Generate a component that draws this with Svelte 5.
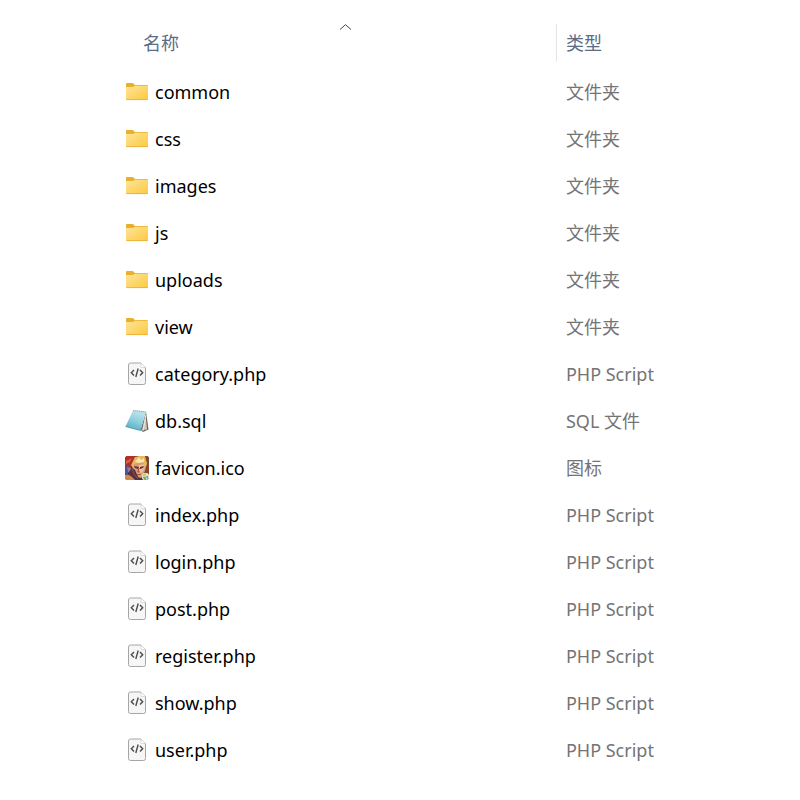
<script>
  let files = [
    { name: "common", type: "文件夹", icon: "folder" },
    { name: "css", type: "文件夹", icon: "folder" },
    { name: "images", type: "文件夹", icon: "folder" },
    { name: "js", type: "文件夹", icon: "folder" },
    { name: "uploads", type: "文件夹", icon: "folder" },
    { name: "view", type: "文件夹", icon: "folder" },
    { name: "category.php", type: "PHP Script", icon: "code" },
    { name: "db.sql", type: "SQL 文件", icon: "note" },
    { name: "favicon.ico", type: "图标", icon: "hero" },
    { name: "index.php", type: "PHP Script", icon: "code" },
    { name: "login.php", type: "PHP Script", icon: "code" },
    { name: "post.php", type: "PHP Script", icon: "code" },
    { name: "register.php", type: "PHP Script", icon: "code" },
    { name: "show.php", type: "PHP Script", icon: "code" },
    { name: "user.php", type: "PHP Script", icon: "code" },
  ];
  let ascending = true;

  function toggleSort() {
    files = [...files].reverse();
    ascending = !ascending;
  }
</script>

<style>
  :global(body) {
    margin: 0;
    background: #fff;
  }
  .files {
    padding: 21px 12px 21px 125px;
    font-family: "Noto Sans", "Noto Sans CJK SC", sans-serif;
    font-size: 18px;
    line-height: 24px;
  }
  table {
    width: 100%;
    table-layout: fixed;
    border-collapse: collapse;
  }
  th,
  td {
    height: 47px;
    padding: 0;
    text-align: left;
    font-weight: normal;
  }
  th {
    vertical-align: top;
  }
  .name {
    width: 65%;
  }
  .heading {
    display: block;
    position: relative;
    box-sizing: border-box;
    height: 38px;
    margin-top: 3px;
    padding: 0 0 0 9px;
    border: 0;
    background: none;
    color: #5a6c86;
    font: inherit;
    text-align: left;
  }
  .name .heading {
    width: calc(100% - 10px);
    margin-left: 10px;
    padding-left: 8px;
  }
  .type .heading {
    width: 100%;
    border-left: 1px solid #e5e5e5;
  }
  .arrow {
    position: absolute;
    top: 0;
    left: 50%;
    margin-left: -6px;
  }
  .descending {
    transform: scaleY(-1);
  }
  .file {
    display: flex;
    align-items: center;
    gap: 6px;
    color: #000;
  }
  .kind {
    padding-left: 10px;
    color: #747474;
  }
  svg {
    display: block;
    flex: none;
  }
</style>

<svelte:head>
  <title>Files</title>
</svelte:head>

<!-- gradients shared by the row icons -->
<svg width="0" height="0" style:position="absolute" aria-hidden="true">
  <defs>
    <linearGradient id="folder-front" x1="0" y1="0" x2="1" y2="1">
      <stop offset="0" stop-color="#ffe59a" />
      <stop offset="1" stop-color="#fcc93f" />
    </linearGradient>
    <linearGradient id="note-cover" x1="0.7" y1="0" x2="0.3" y2="1">
      <stop offset="0" stop-color="#c3e6ec" />
      <stop offset="0.5" stop-color="#8fd0de" />
      <stop offset="1" stop-color="#55adc2" />
    </linearGradient>
    <clipPath id="hero-frame">
      <rect width="24" height="24" rx="3" />
    </clipPath>
  </defs>
</svg>

<main class="files">
  <table>
    <thead>
      <tr>
        <th class="name">
          <button class="heading" on:click={toggleSort}>
            名称
            <svg class="arrow" class:descending={!ascending} width="13" height="6" viewBox="0 0 13 6">
              <path d="M1 5.500 6.500 .7 12 5.500" fill="none" stroke="#444" />
            </svg>
          </button>
        </th>
        <th class="type"><button class="heading">类型</button></th>
      </tr>
    </thead>
    <tbody>
      {#each files as file}
        <tr>
          <td>
            <div class="file">
              <svg width="24" height="24" viewBox="0 0 24 24" aria-hidden="true">
                {#if file.icon === "folder"}
                  <path d="M1 4q0-1 1-1h5.500q.6 0 1 .5L10 5h12q1 0 1 1v3H1z" fill="#e9b02c" />
                  <path d="M1 7h7l2-1.200h13V19q0 1-1 1H2q-1 0-1-1z" fill="url(#folder-front)" />
                  <path d="M1.300 19.600h21.400" stroke="#e5ac35" stroke-width=".8" />
                {:else if file.icon === "code"}
                  <path d="M5.500 1h10.500l4.500 4.500v15q0 2-2 2h-13q-2 0-2-2v-17.500q0-2 2-2z" fill="#f6f6f6" stroke="#a6a6a6" />
                  <path d="M16 1V4.500q0 1 1 1h3.500" fill="#fff" stroke="#ccc" stroke-width=".7" />
                  <path d="m9 8-2.700 2.800L9 13.500m6-5.500 2.700 2.800L15 13.500M13.200 6.500l-2.400 8.500" fill="none" stroke="#4c4c4c" stroke-width="1.400" />
                {:else if file.icon === "note"}
                  <path d="m21 2.500 2.500 18-5.500 2.500-2.500-2.500z" fill="#6d655b" />
                  <path d="m20.500 5 1.500 15.500-5 .5z" fill="#cfcac0" />
                  <path d="m21 6-3 16" stroke="#f2efe8" stroke-width=".8" />
                  <path d="M8 1.500 21 3 15.500 21.500.500 17.500z" fill="url(#note-cover)" />
                  <path d="m.5 17.500 15 4 1-2.500" fill="none" stroke="#4a91a4" stroke-width=".8" />
                  <path d="M8 1.500 21 3" stroke="#a4b0b0" stroke-width="1.200" stroke-dasharray="1.500 .5" />
                {:else}
                  <g clip-path="url(#hero-frame)">
                    <path d="M0 0h24v24H0z" fill="#59302e" />
                    <path d="M0 0h11L6 8l1 3-7-1z" fill="#b52d24" />
                    <path d="m1 5 6-3-2 4-4 2z" fill="#d6623b" />
                    <path d="m0 9 6 2 1 7-7 1z" fill="#4b5391" />
                    <path d="m2 11 4 1 1 5-4-1z" fill="#a0758e" />
                    <path d="M20 0h4v18l-5-2z" fill="#83452b" />
                    <path d="m7 8 3-6 8-1 4 6-2 8-4 7-4-1-4-7z" fill="#d99a74" />
                    <path d="m14 9 6-1-1 6-4 5-2-2z" fill="#f0bd93" />
                    <path d="m6 9 4-8 4-1h6l2 8-2 3-2-5-5 1-4 1-1 4z" fill="#e5b85e" />
                    <path d="m10 6 4-5 2 3 3-2v4l-5 1z" fill="#fae6ab" />
                    <path d="m9 10 5 1-1 2-3-1zm6 1 4-1-1 2-3 1z" fill="#603336" />
                    <path d="m14 12-1 4h2m-3 3 4-1" fill="none" stroke="#8b4938" />
                    <path d="m7 12 3 2 3 7 4 3H4l-1-7z" fill="#543142" />
                    <path d="m7 13 2 5 4 5" fill="none" stroke="#97533f" />
                    <path d="M0 19q4-1 7 2l3 3H0z" fill="#cf8a50" />
                    <circle cx="20.500" cy="20.500" r="3.800" fill="#e9ead8" />
                    <path d="M17.500 20q1-3.500 4-2.500l-1 3z" fill="#d7c94d" />
                    <path d="m20.500 20.500 3-1-1 4z" fill="#65aebe" />
                    <path d="m17.500 20.500 3 .5 1 3h-2z" fill="#78aa4f" />
                  </g>
                {/if}
              </svg>
              {file.name}
            </div>
          </td>
          <td class="kind">{file.type}</td>
        </tr>
      {/each}
    </tbody>
  </table>
</main>
